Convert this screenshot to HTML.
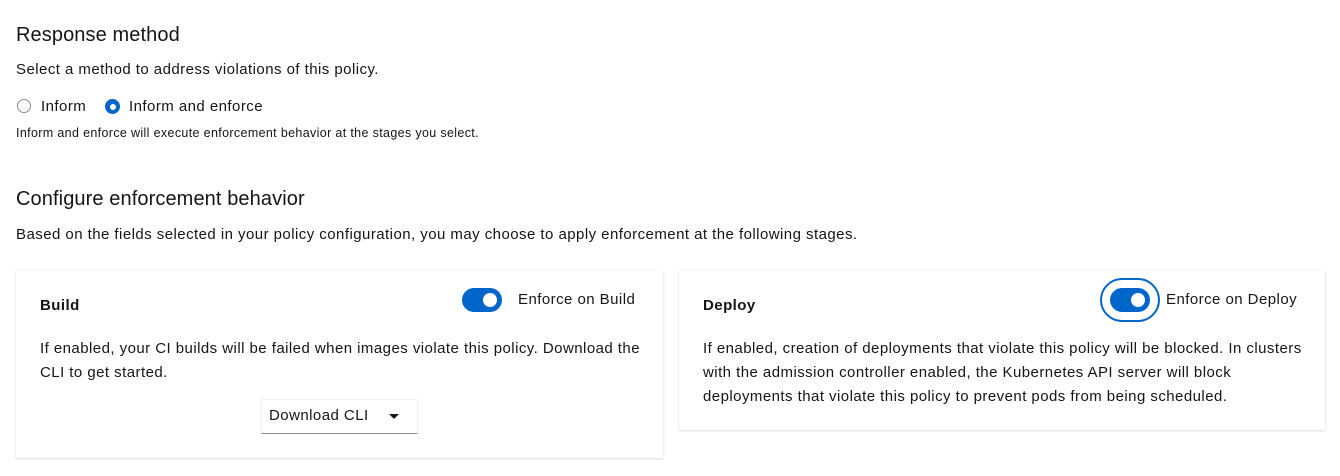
<!DOCTYPE html>
<html><head><style>
body{margin:0;width:1340px;height:476px;background:#fff;font-family:"Liberation Sans",sans-serif;color:#151515;position:relative;overflow:hidden}
.a{position:absolute;white-space:nowrap}
h2{font-size:20px;font-weight:400;margin:0;letter-spacing:0.1px}
.p{font-size:15px;letter-spacing:0.45px}
.s{font-size:12.5px;letter-spacing:0.35px}
.card{position:absolute;background:#fff;box-shadow:0 1px 2px rgba(3,3,3,.12),0 0 2px rgba(3,3,3,.06)}
.tog{position:absolute;width:40px;height:24px;border-radius:12px;background:#0066cc}
.tog:after{content:"";position:absolute;right:5px;top:5px;width:14px;height:14px;border-radius:50%;background:#fff}
</style></head><body>
<h2 class="a" style="left:16px;top:24px">Response method</h2>
<div class="a p" style="left:16px;top:61px">Select a method to address violations of this policy.</div>
<div class="a" style="left:17px;top:99px;width:14px;height:14px;border:1px solid #8a8d90;border-radius:50%;box-sizing:border-box"></div>
<div class="a p" style="left:41px;top:98px">Inform</div>
<div class="a" style="left:105px;top:99px;width:15px;height:15px;border-radius:50%;background:#0066cc"><div style="position:absolute;left:4.5px;top:4.5px;width:6px;height:6px;border-radius:50%;background:#fff"></div></div>
<div class="a p" style="left:129px;top:98px">Inform and enforce</div>
<div class="a s" style="left:16px;top:126px">Inform and enforce will execute enforcement behavior at the stages you select.</div>
<h2 class="a" style="left:16px;top:188px">Configure enforcement behavior</h2>
<div class="a p" style="left:16px;top:226px">Based on the fields selected in your policy configuration, you may choose to apply enforcement at the following stages.</div>

<div class="card" style="left:16px;top:270px;width:647px;height:188px"></div>
<div class="a p" style="left:40px;top:297px;font-weight:700">Build</div>
<div class="tog" style="left:462px;top:288px"></div>
<div class="a p" style="left:518px;top:291px">Enforce on Build</div>
<div class="a p" style="left:40px;top:337px;line-height:24px;white-space:normal;width:605px">If enabled, your CI builds will be failed when images violate this policy. Download the CLI to get started.</div>
<div class="a" style="left:261px;top:399px;width:157px;height:35px;box-sizing:border-box;border:1px solid #f0f0f0;border-bottom:1px solid #8a8d90"></div>
<div class="a p" style="left:269px;top:407px">Download CLI</div>
<div class="a" style="left:389px;top:414px;width:0;height:0;border-left:5px solid transparent;border-right:5px solid transparent;border-top:5px solid #151515"></div>

<div class="card" style="left:679px;top:270px;width:646px;height:160px"></div>
<div class="a p" style="left:703px;top:297px;font-weight:700">Deploy</div>
<div class="a" style="left:1100px;top:278px;width:60px;height:44px;border:2px solid #0066cc;border-radius:22px;box-sizing:border-box"></div>
<div class="tog" style="left:1110px;top:288px"></div>
<div class="a p" style="left:1166px;top:291px">Enforce on Deploy</div>
<div class="a p" style="left:703px;top:337px;line-height:24px;white-space:normal;width:605px">If enabled, creation of deployments that violate this policy will be blocked. In clusters with the admission controller enabled, the Kubernetes API server will block deployments that violate this policy to prevent pods from being scheduled.</div>
</body></html>
